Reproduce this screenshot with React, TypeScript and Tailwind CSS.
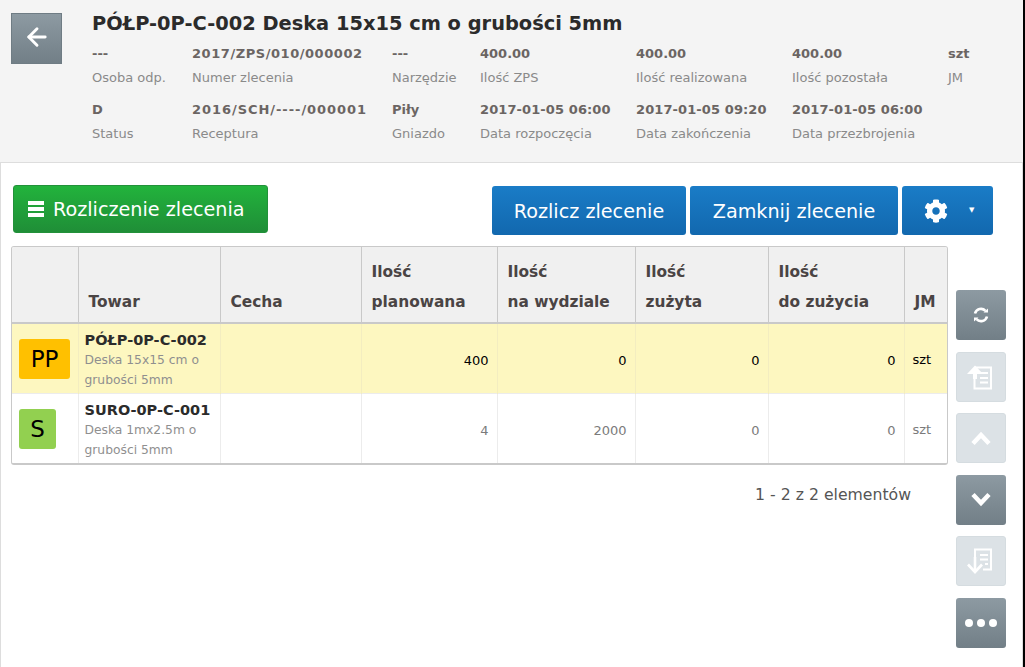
import { ArrowLeft } from 'lucide-react';
import { FaCog } from 'react-icons/fa';
import type { ReactNode } from 'react';

const font = { fontFamily: '"DejaVu Sans", Verdana, sans-serif' };

const headerRows = [
  [
    ['---', 'Osoba odp.', 'w-[100px]', ''],
    ['2017/ZPS/010/000002', 'Numer zlecenia', 'w-[200px]', 'tracking-[0.55px]'],
    ['---', 'Narzędzie', 'w-[88px]', ''],
    ['400.00', 'Ilość ZPS', 'w-[156px]', ''],
    ['400.00', 'Ilość realizowana', 'w-[156px]', ''],
    ['400.00', 'Ilość pozostała', 'w-[156px]', ''],
    ['szt', 'JM', 'w-[60px]', ''],
  ],
  [
    ['D', 'Status', 'w-[100px]', ''],
    ['2016/SCH/----/000001', 'Receptura', 'w-[200px]', 'tracking-[0.95px]'],
    ['Piły', 'Gniazdo', 'w-[88px]', ''],
    ['2017-01-05 06:00', 'Data rozpoczęcia', 'w-[156px]', 'tracking-[0.1px]'],
    ['2017-01-05 09:20', 'Data zakończenia', 'w-[156px]', 'tracking-[0.1px]'],
    ['2017-01-05 06:00', 'Data przezbrojenia', 'w-[156px]', 'tracking-[0.1px]'],
  ],
];

function RefreshIcon() {
  return (
    <svg width="18" height="18" viewBox="0 0 18 18" fill="none" stroke="white" strokeWidth="2.6">
      <path d="M3 7.500A6.200 6.200 0 0 1 13.500 4.800" />
      <path d="M15 10.500A6.200 6.200 0 0 1 4.500 13.200" />
      <path d="M11.500 6.500h4.500V2.500z" fill="white" stroke="none" />
      <path d="M6.500 11.500H2v4z" fill="white" stroke="none" />
    </svg>
  );
}

function ListUpIcon() {
  return (
    <svg width="28" height="28" viewBox="0 0 28 28" fill="none" stroke="white" strokeWidth="2">
      <path d="M8 4.500h16v21H7.500V13" />
      <path d="M13 10h8M13 15h8M13 19.500h8" />
      <path d="M0 11L8 2.500l8 8.500z" fill="white" stroke="none" />
      <path d="M8 8v8" strokeWidth="4" />
    </svg>
  );
}

function ListDownIcon() {
  return (
    <svg width="28" height="28" viewBox="0 0 28 28" fill="none" stroke="white" strokeWidth="2">
      <path d="M8 13V2.500h16v20H16" />
      <path d="M13 8h8M13 12.500h8M18 17h3" />
      <path d="M1 17.500L8 25l7-7.500" strokeWidth="2.600" />
      <path d="M8 10v14" strokeWidth="2.600" />
    </svg>
  );
}

function ChevronIcon({ up }: { up?: boolean }) {
  return (
    <svg width="20" height="16" viewBox="0 0 20 16" fill="none" stroke="white" strokeWidth="4.500" strokeMiterlimit="10">
      <path d={up ? 'M2 13.500L10 5l8 8.500' : 'M2 2.500L10 11l8-8.500'} />
    </svg>
  );
}

function SideButton({ children, off }: { children: ReactNode; off?: boolean }) {
  return (
    <div
      className={
        off
          ? 'w-[50px] h-[50px] rounded-[3px] flex items-center justify-center bg-[#dce2e6] border border-[#d5dce0]'
          : 'w-[50px] h-[50px] rounded-[3px] flex items-center justify-center bg-gradient-to-b from-[#8d9aa2] to-[#727f87]'
      }
    >
      {children}
    </div>
  );
}

function BlueButton({ children, className }: { children: ReactNode; className: string }) {
  return (
    <div className={`h-[49px] rounded-[3px] flex items-center text-white text-[19.2px] bg-gradient-to-b from-[#1a7cc7] to-[#1268ae] ${className}`}>
      {children}
    </div>
  );
}

const th = 'border-r border-[#c9c9c9] align-bottom text-left font-bold text-[15.4px] leading-[30px] text-[#4a4444] pl-[10px] pb-[5px]';
const tdYellow = 'border-r border-[#f3edc0] text-right text-[13px] pr-[8px] pt-[4px]';
const tdWhite = 'border-r border-[#ececec] text-right text-[13px] pr-[8px] pt-[4px]';

export default function App() {
  return (
    <div style={font} className="w-[1025px] h-[667px] overflow-hidden bg-white flex flex-col border-r-2 border-black">
      <div className="h-[163px] shrink-0 bg-[#f4f4f4] border-b border-[#dddddd] flex pl-[11px] pt-[13px]">
        <div className="w-[51px] h-[51px] border border-[#6f7c84] bg-gradient-to-b from-[#8d9aa2] to-[#727f87] flex items-center justify-center">
          <ArrowLeft size={28} color="white" strokeWidth={2.5} className="-mt-[3px]" />
        </div>
        <div className="ml-[30px]">
          <h1 className="text-[19.4px] leading-[22px] font-bold text-[#2b2b2b] whitespace-nowrap">PÓŁP-0P-C-002 Deska 15x15 cm o grubości 5mm</h1>
          <div className="mt-[7px] flex flex-col gap-[9px]">
            {headerRows.map((row, i) => (
              <div key={i} className="flex">
                {row.map(([value, label, width, spacing]) => (
                  <div key={label} className={width}>
                    <div className={`text-[13px] leading-[23px] font-bold text-[#6b6563] whitespace-nowrap ${spacing}`}>{value}</div>
                    <div className="mt-px text-[13px] leading-[23px] text-[#8a8a8a] whitespace-nowrap">{label}</div>
                  </div>
                ))}
              </div>
            ))}
          </div>
        </div>
      </div>

      <div className="flex-1 border-x border-[#dddddd]">
        <div className="flex items-start pl-[12px] pr-[29px] pt-[22px]">
          <div className="w-[255px] h-[48px] rounded-[3px] flex items-center pl-[14px] gap-[9px] text-white text-[19.2px] bg-gradient-to-b from-[#22b33c] to-[#1f8e37] border border-[#22913a]">
            <svg width="16" height="16" viewBox="0 0 16 16" fill="white">
              <rect y="0" width="16" height="4" />
              <rect y="6" width="16" height="4" />
              <rect y="12" width="16" height="4" />
            </svg>
            <span className="pt-[2px]">Rozliczenie zlecenia</span>
          </div>
          <div className="ml-auto mt-px flex gap-[4px]">
            <BlueButton className="w-[194px] justify-center pt-[3px]">Rozlicz zlecenie</BlueButton>
            <BlueButton className="w-[208px] justify-center pt-[3px]">Zamknij zlecenie</BlueButton>
            <BlueButton className="w-[91px] pl-[22px] gap-[21px]">
              <FaCog size={24} color="white" />
              <span className="text-[7px]">▼</span>
            </BlueButton>
          </div>
        </div>

        <div className="flex items-start pl-[10px] pt-[11px]">
          <div className="w-[937px]">
            <div className="border border-[#c9c9c9] rounded-[3px] overflow-hidden border-b-2">
              <table className="w-full table-fixed border-collapse">
                <colgroup>
                  <col className="w-[66px]" />
                  <col className="w-[142px]" />
                  <col className="w-[141px]" />
                  <col className="w-[136px]" />
                  <col className="w-[138px]" />
                  <col className="w-[133px]" />
                  <col className="w-[136px]" />
                  <col />
                </colgroup>
                <thead>
                  <tr className="h-[76px] bg-[#f0f0f0] border-b-2 border-[#c9c9c9]">
                    <th className={th}></th>
                    <th className={th}>Towar</th>
                    <th className={th}>Cecha</th>
                    <th className={th}>Ilość<br />planowana</th>
                    <th className={th}>Ilość<br />na wydziale</th>
                    <th className={th}>Ilość<br />zużyta</th>
                    <th className={th}>Ilość<br />do zużycia</th>
                    <th className={`${th} border-r-0`}>JM</th>
                  </tr>
                </thead>
                <tbody>
                  <tr className="h-[70px] bg-[#fdf7c0] text-black border-b border-[#ececec]">
                    <td className="border-r border-[#f3edc0] pl-[7px] pt-[1px]">
                      <div className="w-[51px] h-[40px] rounded-[3px] bg-[#ffc000] flex items-center justify-center text-[23px] text-black">PP</div>
                    </td>
                    <td className="border-r border-[#f3edc0] pl-[6px] pt-[3px] leading-[20px]">
                      <div className="text-[14.5px] font-bold text-[#2b2b2b] whitespace-nowrap">PÓŁP-0P-C-002</div>
                      <div className="text-[12.3px] text-[#8f8f8f] whitespace-nowrap">Deska 15x15 cm o<br />grubości 5mm</div>
                    </td>
                    <td className="border-r border-[#f3edc0]"></td>
                    <td className={tdYellow}>400</td>
                    <td className={tdYellow}>0</td>
                    <td className={tdYellow}>0</td>
                    <td className={tdYellow}>0</td>
                    <td className="text-[13px] pl-[8px] pt-[2px]">szt</td>
                  </tr>
                  <tr className="h-[70px] bg-white text-[#7b7b7b]">
                    <td className="border-r border-[#ececec] pl-[7px] pt-[1px]">
                      <div className="w-[37px] h-[40px] rounded-[3px] bg-[#92d050] flex items-center justify-center text-[23px] text-black">S</div>
                    </td>
                    <td className="border-r border-[#ececec] pl-[6px] pt-[3px] leading-[20px]">
                      <div className="text-[14.5px] font-bold text-[#2b2b2b] whitespace-nowrap">SURO-0P-C-001</div>
                      <div className="text-[12.3px] text-[#8f8f8f] whitespace-nowrap">Deska 1mx2.5m o<br />grubości 5mm</div>
                    </td>
                    <td className="border-r border-[#ececec]"></td>
                    <td className={tdWhite}>4</td>
                    <td className={tdWhite}>2000</td>
                    <td className={tdWhite}>0</td>
                    <td className={tdWhite}>0</td>
                    <td className="text-[13px] pl-[8px] pt-[2px]">szt</td>
                  </tr>
                </tbody>
              </table>
            </div>
            <div className="mt-[20px] pr-[37px] text-right text-[15.7px] leading-[20px] text-[#555555]">1 - 2 z 2 elementów</div>
          </div>

          <div className="ml-[8px] pt-[44px] flex flex-col gap-[11.6px]">
            <SideButton><RefreshIcon /></SideButton>
            <SideButton off><ListUpIcon /></SideButton>
            <SideButton off><ChevronIcon up /></SideButton>
            <SideButton><ChevronIcon /></SideButton>
            <SideButton off><ListDownIcon /></SideButton>
            <SideButton>
              <div className="flex gap-[4px] pt-[1px]">
                <span className="w-[8px] h-[8px] rounded-full bg-white" />
                <span className="w-[8px] h-[8px] rounded-full bg-white" />
                <span className="w-[8px] h-[8px] rounded-full bg-white" />
              </div>
            </SideButton>
          </div>
        </div>
      </div>
    </div>
  );
}
